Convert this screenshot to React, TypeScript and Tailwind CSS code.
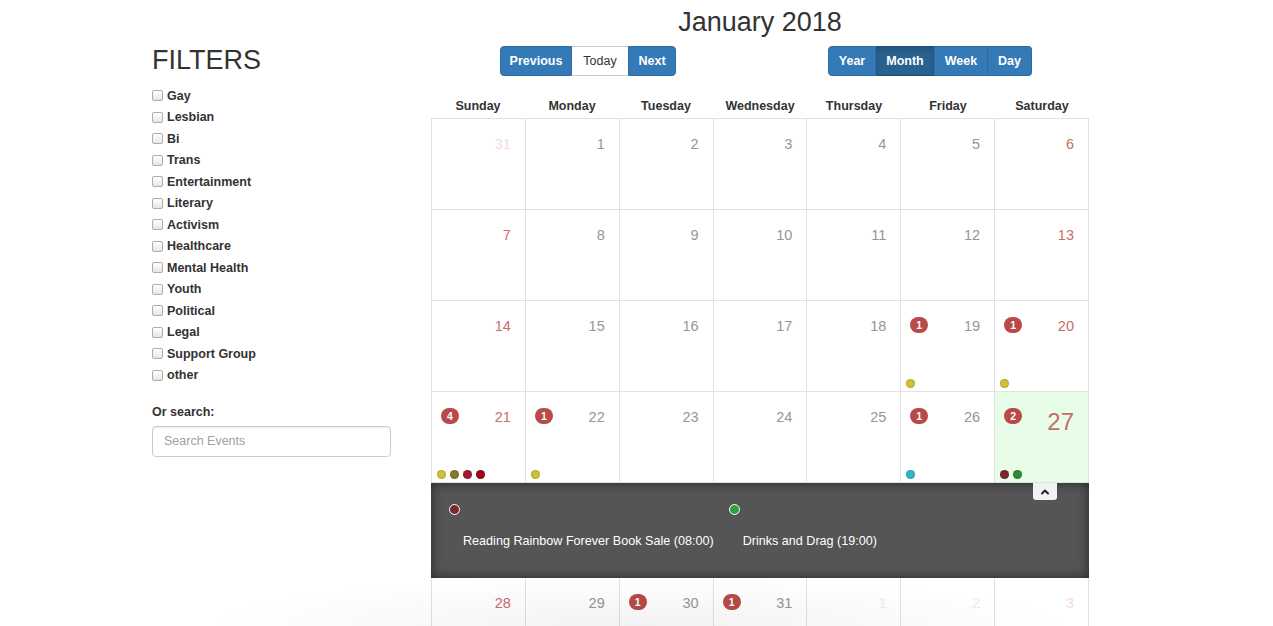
import React from "react";
import { ChevronUp } from "lucide-react";

type Day = {
  n: number;
  out?: boolean;
  weekend?: boolean;
  today?: boolean;
  badge?: number;
  dots?: string[];
};

const filters = [
  "Gay",
  "Lesbian",
  "Bi",
  "Trans",
  "Entertainment",
  "Literary",
  "Activism",
  "Healthcare",
  "Mental Health",
  "Youth",
  "Political",
  "Legal",
  "Support Group",
  "other",
];

const Y = "#d2c233";
const OLIVE = "#8a7a2e";
const DR = "#a11c2c";
const R2 = "#990a16";
const CY = "#2fb6cb";
const MAR = "#7a2a2e";
const GR = "#2e8f37";

const weeks: Day[][] = [
  [
    { n: 31, out: true, weekend: true },
    { n: 1 },
    { n: 2 },
    { n: 3 },
    { n: 4 },
    { n: 5 },
    { n: 6, weekend: true },
  ],
  [
    { n: 7, weekend: true },
    { n: 8 },
    { n: 9 },
    { n: 10 },
    { n: 11 },
    { n: 12 },
    { n: 13, weekend: true },
  ],
  [
    { n: 14, weekend: true },
    { n: 15 },
    { n: 16 },
    { n: 17 },
    { n: 18 },
    { n: 19, badge: 1, dots: [Y] },
    { n: 20, weekend: true, badge: 1, dots: [Y] },
  ],
  [
    { n: 21, weekend: true, badge: 4, dots: [Y, OLIVE, DR, R2] },
    { n: 22, badge: 1, dots: [Y] },
    { n: 23 },
    { n: 24 },
    { n: 25 },
    { n: 26, badge: 1, dots: [CY] },
    { n: 27, weekend: true, today: true, badge: 2, dots: [MAR, GR] },
  ],
];

const lastWeek: Day[] = [
  { n: 28, weekend: true },
  { n: 29 },
  { n: 30, badge: 1 },
  { n: 31, badge: 1 },
  { n: 1, out: true },
  { n: 2, out: true },
  { n: 3, out: true, weekend: true },
];

function numColor(d: Day) {
  if (d.out) return d.weekend ? "text-[#f2dcdc]" : "text-[#ececec]";
  if (d.weekend) return "text-[#c86c6c]";
  return "text-[#969696]";
}

function Cell({ d, h }: { d: Day; h: string }) {
  return (
    <div
      className={`${h} border-r border-b border-[#e1e1e1] flex flex-col justify-between ${
        d.today ? "bg-[#e8fde7]" : "bg-white"
      }`}
    >
      <div className="flex items-start justify-between pt-[16px] pl-[9px] pr-[14px]">
        <div>
          {d.badge ? (
            <span className="flex h-[16px] min-w-[18px] items-center justify-center rounded-full bg-[#b94a48] px-[5px] text-[10.5px] font-bold leading-none text-white">
              {d.badge}
            </span>
          ) : null}
        </div>
        <span
          className={`${numColor(d)} ${
            d.today ? "-mt-[1px] text-[24px] leading-[30px]" : "text-[14.5px] leading-[18px]"
          }`}
        >
          {d.n}
        </span>
      </div>
      <div className="flex gap-[4px] pl-[5px] pb-[3px]">
        {(d.dots || []).map((c, i) => (
          <span
            key={i}
            className="block h-[9px] w-[9px] rounded-full shadow-[inset_0_0_2px_rgba(0,0,0,0.35)]"
            style={{ backgroundColor: c }}
          />
        ))}
      </div>
    </div>
  );
}

export default function App() {
  return (
    <div className="relative h-[626px] overflow-hidden bg-white font-['Liberation_Sans',Arial,sans-serif] text-[#333]">
      <div className="flex pl-[152px]">
        <aside className="w-[279px] shrink-0 pt-[46px]">
          <h2 className="text-[27px] leading-[29px] text-[#333]">FILTERS</h2>
          <ul className="mt-[10px]">
            {filters.map((f) => (
              <li key={f} className="flex h-[21.5px] items-center">
                <span className="block h-[11px] w-[11px] rounded-[2px] border border-[#acacac] bg-gradient-to-b from-white to-[#e6e6e6]" />
                <span className="ml-[4px] text-[12.5px] font-bold leading-none text-[#333]">
                  {f}
                </span>
              </li>
            ))}
          </ul>
          <div className="mt-[16px] text-[12.5px] font-bold leading-[20px]">Or search:</div>
          <div className="mt-[4px] flex h-[31px] w-[239px] items-center rounded-[4px] border border-[#cccccc] px-[11px] shadow-[inset_0_1px_1px_rgba(0,0,0,0.075)]">
            <span className="text-[12.5px] text-[#a0a0a0]">Search Events</span>
          </div>
        </aside>

        <main className="w-[658px] shrink-0">
          <h1 className="pt-[6px] text-center text-[27px] leading-[32px] text-[#333]">
            January 2018
          </h1>
          <div className="mt-[8px] flex h-[30px]">
            <div className="ml-[69px] flex h-[30px]">
              <span className="flex w-[72px] items-center justify-center rounded-l-[4px] border border-[#2e6da4] bg-[#337ab7] text-[12.5px] font-bold text-white">
                Previous
              </span>
              <span className="flex w-[56px] items-center justify-center border-y border-[#cccccc] bg-white text-[12.5px] text-[#333]">
                Today
              </span>
              <span className="flex w-[48px] items-center justify-center rounded-r-[4px] border border-[#2e6da4] bg-[#337ab7] text-[12.5px] font-bold text-white">
                Next
              </span>
            </div>
            <div className="ml-[152px] flex h-[30px]">
              <span className="flex w-[48px] items-center justify-center rounded-l-[4px] border border-[#2e6da4] bg-[#337ab7] text-[12.5px] font-bold text-white">
                Year
              </span>
              <span className="flex w-[58px] items-center justify-center border-y border-[#204d74] bg-[#286090] text-[12.5px] font-bold text-white shadow-[inset_0_3px_5px_rgba(0,0,0,0.125)]">
                Month
              </span>
              <span className="flex w-[54px] items-center justify-center border border-[#2e6da4] bg-[#337ab7] text-[12.5px] font-bold text-white">
                Week
              </span>
              <span className="flex w-[44px] items-center justify-center rounded-r-[4px] border border-l-0 border-[#2e6da4] bg-[#337ab7] text-[12.5px] font-bold text-white">
                Day
              </span>
            </div>
          </div>

          <div className="mt-[20px] grid h-[22px] grid-cols-7 text-center text-[12.5px] font-bold leading-[20px] text-[#333]">
            {["Sunday", "Monday", "Tuesday", "Wednesday", "Thursday", "Friday", "Saturday"].map(
              (d) => (
                <div key={d}>{d}</div>
              )
            )}
          </div>

          <div className="border-l border-t border-[#e1e1e1]">
            {weeks.map((w, i) => (
              <div key={i} className="grid grid-cols-7">
                {w.map((d, j) => (
                  <Cell key={j} d={d} h="h-[91px]" />
                ))}
              </div>
            ))}
            <div className="relative -ml-px h-[95px] bg-[#555555] shadow-[inset_0_0_12px_rgba(0,0,0,0.55)]">
              <div className="flex gap-[15px] pl-[18px] pt-[21px]">
                <div className="flex flex-col">
                  <span className="block h-[11px] w-[11px] rounded-full border border-white bg-[#7a2a2e]" />
                  <span className="ml-[14px] mt-[18px] text-[12.6px] leading-[16px] text-white">
                    Reading Rainbow Forever Book Sale (08:00)
                  </span>
                </div>
                <div className="flex flex-col">
                  <span className="block h-[11px] w-[11px] rounded-full border border-white bg-[#2ea043]" />
                  <span className="ml-[14px] mt-[18px] text-[12.6px] leading-[16px] text-white">
                    Drinks and Drag (19:00)
                  </span>
                </div>
              </div>
              <span className="absolute right-[32px] top-0 flex h-[17px] w-[24px] items-center justify-center rounded-b-[3px] bg-[#f2f2f2]">
                <ChevronUp size={12} strokeWidth={4} className="text-[#222]" />
              </span>
            </div>
            <div className="grid grid-cols-7">
              {lastWeek.map((d, j) => (
                <Cell key={j} d={d} h="h-[60px]" />
              ))}
            </div>
          </div>
        </main>
      </div>
      <div className="pointer-events-none absolute bottom-[-50px] left-[200px] h-[100px] w-[880px] bg-[radial-gradient(ellipse_at_center,rgba(0,0,0,0.05),rgba(0,0,0,0)_70%)]" />
    </div>
  );
}
